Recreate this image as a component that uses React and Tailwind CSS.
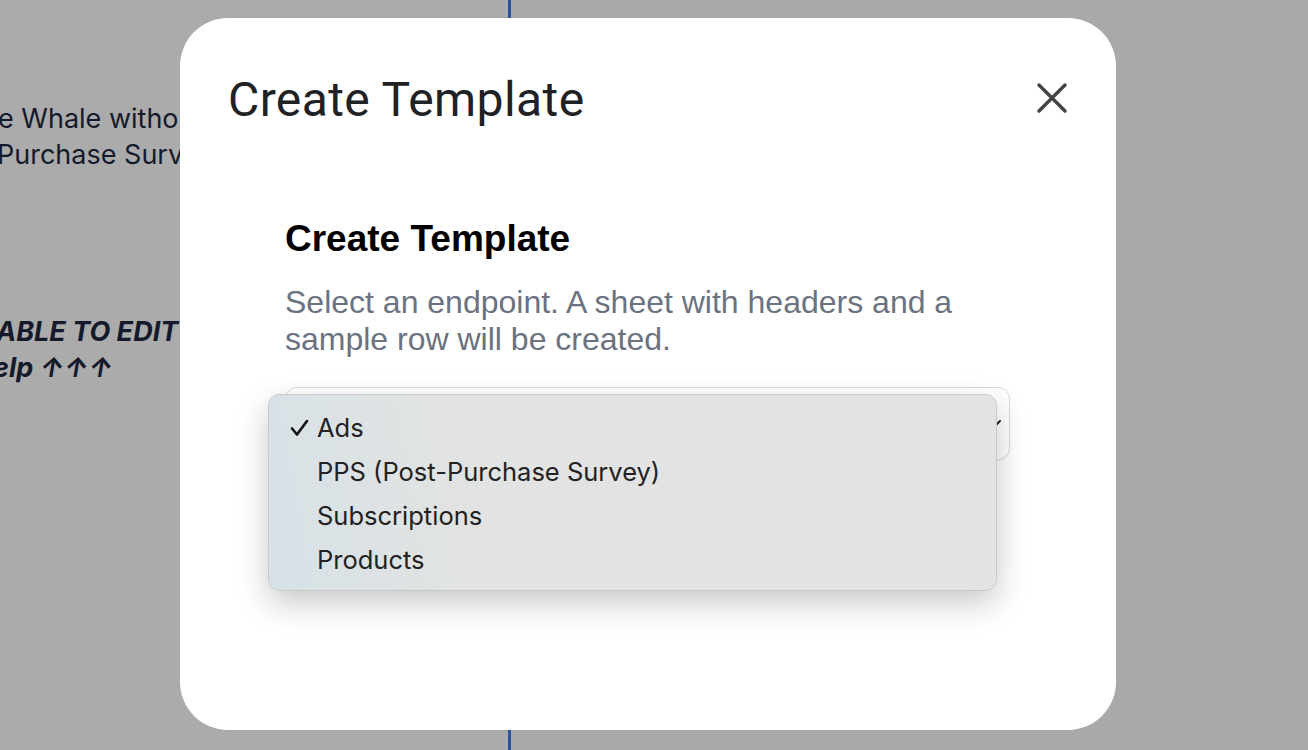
export default function App() {
  const options = ['Ads', 'PPS (Post-Purchase Survey)', 'Subscriptions', 'Products']

  return (
    <div className="relative w-[1308px] h-[750px] overflow-hidden bg-[#ababab] flex">
      {/* Page behind the overlay */}
      <div className="w-[508px] shrink-0 pt-[101px] text-[#141a2b] text-[27px] leading-[36px] font-['Inter',sans-serif] overflow-hidden whitespace-nowrap">
        <div className="-ml-[2px]">e Whale without the extra</div>
        <div className="-ml-[3px]">Purchase Survey data</div>
        <div className="mt-[141px] -ml-[4px] font-bold italic">ABLE TO EDIT THIS SHEET</div>
        <div className="-ml-[7px] font-bold italic">elp ↑↑↑</div>
      </div>
      <div className="w-[3px] shrink-0 bg-[#2c4fa0]" />
      <div className="flex-1 bg-[#a8a9a8]" />

      {/* Modal */}
      <div className="absolute left-[180px] top-[18px] w-[936px] h-[712px] rounded-[48px] bg-white">
        <div className="flex items-start justify-between pl-[48px] pr-[44px] pt-[54px]">
          <h1 className="text-[48px] leading-[56px] text-[#202124] font-['Roboto',sans-serif] tracking-[0.4px]">
            Create Template
          </h1>
          <button className="mt-[6px] w-[40px] h-[40px] flex items-center justify-center text-[#444]">
            <svg width="30" height="30" viewBox="0 0 30 30" fill="none" stroke="currentColor" strokeWidth="3.4" strokeLinecap="round">
              <path d="M2 2 L28 28 M28 2 L2 28" />
            </svg>
          </button>
        </div>

        <div className="ml-[105px] mr-[106px] mt-[89px] font-['Liberation_Sans',Arial,sans-serif]">
          <h2 className="text-[37px] leading-[44px] font-bold text-black">Create Template</h2>
          <p className="mt-[23px] text-[32px] leading-[37px] text-[#6b7280]">
            Select an endpoint. A sheet with headers and a sample row will be created.
          </p>
          <div className="relative mt-[29px]">
            <div className="h-[73px] rounded-[12px] border border-[#dcdcdc] bg-white shadow-[0_1px_2px_rgba(0,0,0,0.06)] flex items-center justify-end pr-[8px]">
              <svg width="14" height="10" viewBox="0 0 14 10" fill="none" stroke="#222" strokeWidth="2" strokeLinecap="round">
                <path d="M1 2 L7 8 L13 2" />
              </svg>
            </div>

            {/* Open native dropdown */}
            <div className="absolute left-[-17px] top-[7px] w-[729px] h-[197px] rounded-[11px] border border-[#c9c9c9] bg-[linear-gradient(80deg,#d6e1e6_0%,#e1e3e3_25%,#e3e3e3_40%)] shadow-[0_12px_32px_rgba(0,0,0,0.22)] pt-[11px] font-['Inter',sans-serif] text-[25.5px] text-[#222]">
              {options.map((o, i) => (
                <div key={o} className="relative h-[44px] flex items-center pl-[48px]">
                  {i === 0 && (
                    <svg className="absolute left-[21px] top-[13px]" width="19" height="18" viewBox="0 0 19 18" fill="none" stroke="#111" strokeWidth="2.6" strokeLinecap="round" strokeLinejoin="round">
                      <path d="M2 9.5 L7 15.5 L17 2" />
                    </svg>
                  )}
                  {o}
                </div>
              ))}
            </div>
          </div>
        </div>
      </div>
    </div>
  )
}
